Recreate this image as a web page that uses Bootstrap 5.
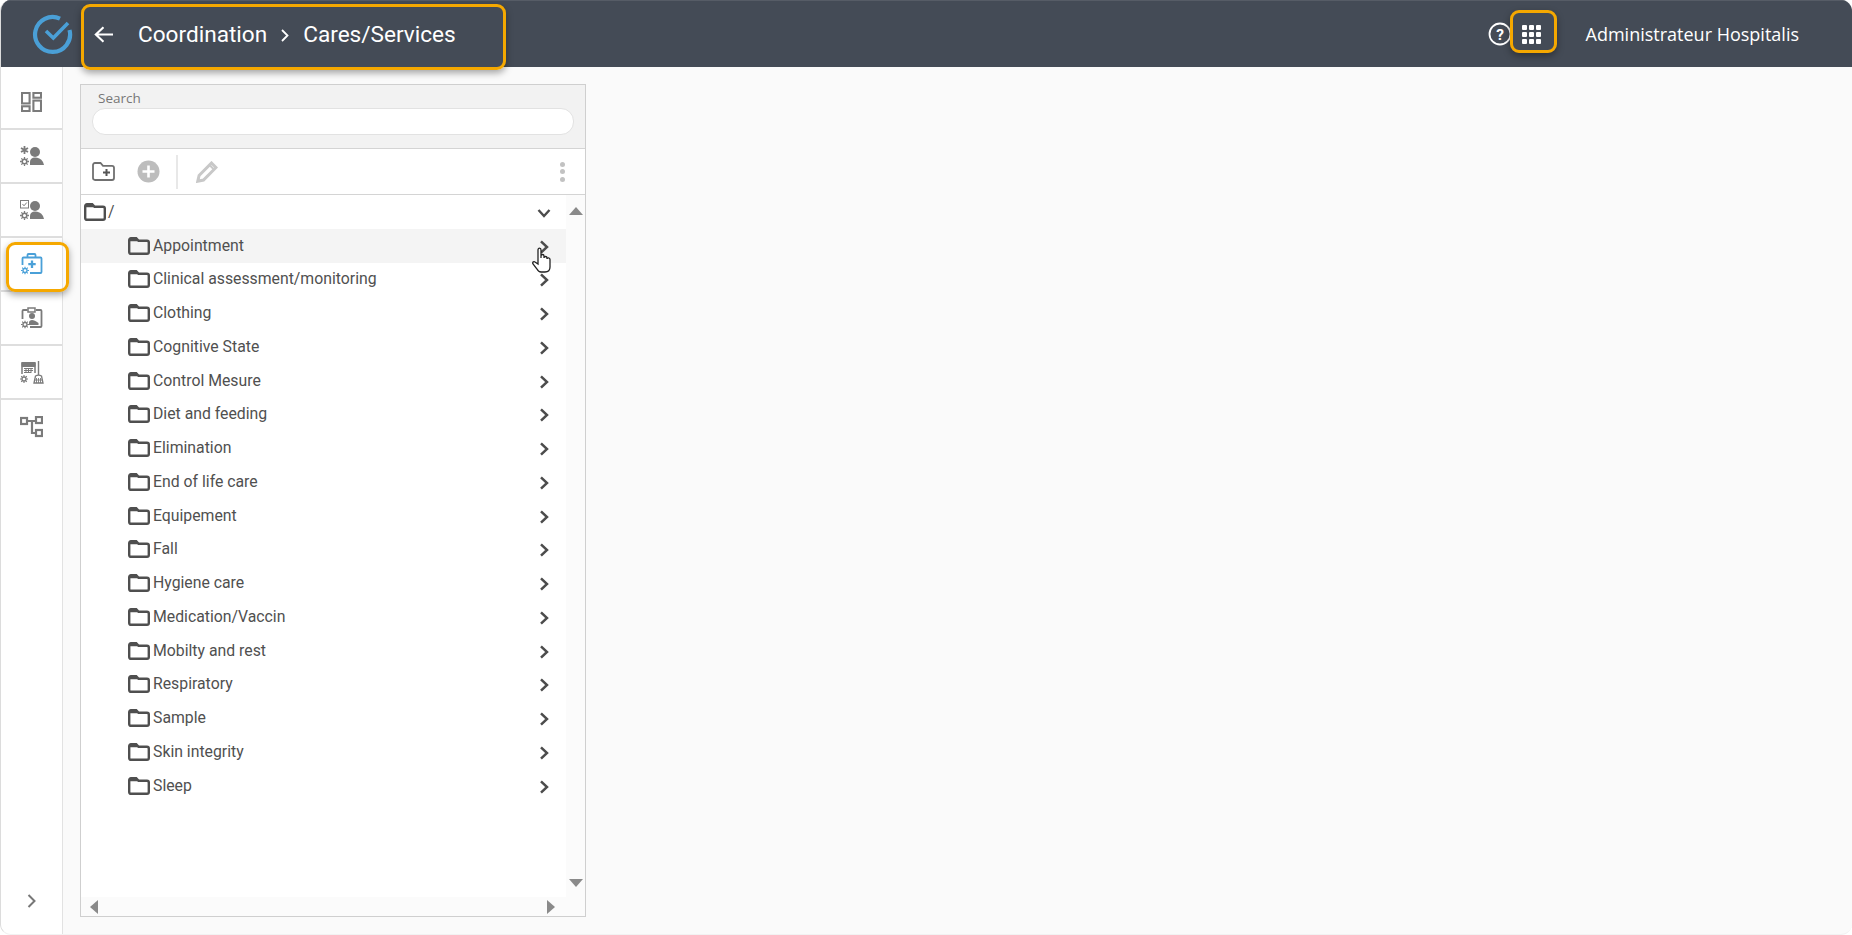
<!DOCTYPE html>
<html lang="en">
<head>
<meta charset="utf-8">
<title>Cares/Services</title>
<link href="https://cdn.jsdelivr.net/npm/bootstrap@5.3.0/dist/css/bootstrap.min.css" rel="stylesheet">
<style>
html,body{height:100%;margin:0;background:#fff;overflow:hidden}
body{font-family:Roboto,"Liberation Sans",sans-serif;color:#555}
.app-win{height:935px;border-radius:11px;overflow:hidden;border-left:1px solid #dcdcdc;border-bottom:1px solid #f2f2f2;position:relative;background:#fafafa}
.top-bar{height:67px;background:#444b56;color:#fff;border-top:1px solid #565c66;flex:none}
.logo-slot{width:80px;padding-left:31px}
.crumb-back{width:19px;margin-left:13px;margin-right:25px}
.crumb-text{font-size:22.6px;line-height:1;padding-top:2px}
.crumb-sep{margin:0 14px 0 14px}
.help-slot{margin-right:10px}
.apps-slot{width:19px;margin-right:45px;display:grid;grid-template-columns:repeat(3,5px);gap:2px}
.apps-slot span{height:5px;background:#fff;border-radius:1px}
.user-name{font-family:"Open Sans","Liberation Sans",sans-serif;font-size:18px;margin-right:53px}
.side-rail{width:62px;flex:none;background:#fff;border-right:1px solid #e2e2e2;padding-top:9px}
.rail-item{height:54px;border-bottom:2px solid #dedede;color:#7b7b7b}
.rail-item.no-rule{border-bottom:0}
.rail-item.is-active{color:#4aa0d8}
.rail-more{height:42px;padding-top:2px;color:#777}
.work-area{padding:17px 0 17px 17px}
.tree-panel{width:506px;height:100%;background:#fff;border:1px solid #cfcfcf}
.search-head{height:64px;background:#f2f2f2;border-bottom:1px solid #d4d4d4;padding:4px 10px 0 11px}
.search-label{font-family:"Open Sans","Liberation Sans",sans-serif;font-size:13.5px;line-height:18px;color:#777;padding-left:6px}
.search-box{height:27px;border:1px solid #e2e2e2;border-radius:13px;background:#fff;width:482px;margin-top:1px}
.tool-row{height:46px;border-bottom:1px solid #d4d4d4;padding:0 11px 0 11px}
.tool-plus{margin-left:22px}
.tool-sep{width:2px;height:34px;background:#e8e8e8;margin:0 18px 0 16px}
.kebab{margin-left:auto;margin-right:9px;width:5px;display:grid;gap:2.5px}
.kebab span{height:5px;width:5px;border-radius:50%;background:#c2c2c2}
.tree-body{min-height:0}
.tree-scroll{min-width:0}
.tree-row{height:33.75px;font-size:15.8px;color:#505050;padding-left:47px;padding-right:17px}
.tree-row.root-row{padding-left:3px;padding-right:15px}
.tree-row.is-hover{background:#f4f4f4}
.tree-label{margin-left:3px;line-height:1}
.root-row .tree-label{margin-left:2px}
.tree-row svg.fold{flex:none}
.tree-row svg.chev{margin-left:auto;margin-top:2px;flex:none}
.vbar{width:19px;background:#fbfbfb;padding:12px 0 10px}
.hbar{height:19px;background:#fbfbfb;padding:0 30px 0 9px}
.mark-box{position:absolute;border:3px solid #f5a800;border-radius:9px;box-shadow:0 3px 7px rgba(0,0,0,.35);pointer-events:none}
.mark-crumb{left:80px;top:4px;width:425px;height:66px}
.mark-apps{left:1509px;top:10px;width:47px;height:43px}
.mark-rail{left:5px;top:242px;width:63px;height:50px}
.hand-cursor{position:absolute;left:531px;top:247px}
</style>
</head>
<body>
<svg width="0" height="0" class="d-block" aria-hidden="true">
<symbol id="folder" viewBox="0 0 22 18"><path d="M1.200 3.200C1.200 2 2 1.200 3 1.200h5.200l2.400 2.600H19c1.200 0 1.800.8 1.800 1.800V15c0 1.100-.7 1.800-1.800 1.800H3c-1.100 0-1.800-.7-1.800-1.800z" fill="none" stroke="#4f4f4f" stroke-width="2.400"/><path d="M1 2.600C1 1.500 1.800 1 3 1h5.200l2.400 3.200H1z" fill="#4f4f4f"/></symbol>
<symbol id="chevr" viewBox="0 0 10 14"><path d="M2 1.300 8 7l-6 5.700" fill="none" stroke="#4c4c4c" stroke-width="2.500"/></symbol>
<symbol id="gear" viewBox="0 0 12 12"><circle cx="6" cy="6" r="3" fill="none" stroke="currentColor" stroke-width="2"/><path d="M6 0v2.500M6 9.500V12M0 6h2.500M9.500 6H12M1.800 1.800l1.800 1.800M8.400 8.400l1.800 1.800M1.800 10.200l1.800-1.800M8.400 3.600l1.800-1.800" stroke="currentColor" stroke-width="1.700"/></symbol>
</svg>
<div class="app-win d-flex flex-column">
  <header class="top-bar d-flex align-items-center">
    <div class="logo-slot d-flex align-items-center">
      <svg width="41" height="41" viewBox="0 0 41 41"><path d="M28 4.600A17.500 17.500 0 1 0 37.500 16" fill="none" stroke="#4a9fd6" stroke-width="4.200"/><path d="M14 17l7.300 7L36 9" fill="none" stroke="#4a9fd6" stroke-width="3.600"/></svg>
    </div>
    <svg class="crumb-back" width="19" height="17" viewBox="0 0 19 17"><path d="M19 8.500H2M9.500 1.200 1.800 8.500l7.700 7.300" fill="none" stroke="#fff" stroke-width="2.100"/></svg>
    <div class="crumb-text d-flex align-items-center">
      <span>Coordination</span>
      <svg class="crumb-sep" width="8" height="13" viewBox="0 0 8 13"><path d="M1 1l5.500 5.500L1 12" fill="none" stroke="#fff" stroke-width="1.800"/></svg>
      <span>Cares/Services</span>
    </div>
    <div class="ms-auto d-flex align-items-center">
      <svg class="help-slot" width="24" height="24" viewBox="0 0 24 24"><circle cx="12" cy="12" r="10.500" fill="none" stroke="#fff" stroke-width="1.800"/><text x="12" y="17.500" text-anchor="middle" font-family="Roboto,sans-serif" font-size="15.500" font-weight="700" fill="#fff">?</text></svg>
      <div class="apps-slot"><span></span><span></span><span></span><span></span><span></span><span></span><span></span><span></span><span></span></div>
      <div class="user-name">Administrateur Hospitalis</div>
    </div>
  </header>
  <div class="d-flex flex-grow-1" style="min-height:0">
    <nav class="side-rail d-flex flex-column">
      <div class="rail-item d-flex align-items-center justify-content-center">
        <svg width="21" height="20" viewBox="0 0 22 21" fill="none" stroke="currentColor" stroke-width="2.200"><rect x="1" y="1" width="8" height="11"/><rect x="13" y="1" width="8" height="5"/><rect x="1" y="15" width="8" height="5"/><rect x="13" y="9" width="8" height="11"/></svg>
      </div>
      <div class="rail-item d-flex align-items-center justify-content-center">
        <svg width="24" height="21" viewBox="0 0 24 21"><use href="#gear" x="0" y="11" width="9" height="9"/><path d="M4.500 0v8M1 2l7 4M8 2 1 6" stroke="currentColor" stroke-width="1.800"/><circle cx="15" cy="6" r="5" fill="currentColor"/><path d="M10 19v-3c0-3 2-4.500 5-4.500s6 1 8 4.500l1 3z" fill="currentColor"/></svg>
      </div>
      <div class="rail-item d-flex align-items-center justify-content-center">
        <svg width="24" height="21" viewBox="0 0 24 21"><use href="#gear" x="0" y="11" width="9" height="9"/><rect x=".5" y=".5" width="8" height="7.500" fill="none" stroke="currentColor"/><path d="M2.500 4l1.500 1.800L6.800 2.500" fill="none" stroke="currentColor"/><circle cx="15" cy="6" r="5" fill="currentColor"/><path d="M10 19v-3c0-3 2-4.500 5-4.500s6 1 8 4.500l1 3z" fill="currentColor"/></svg>
      </div>
      <div class="rail-item is-active d-flex align-items-center justify-content-center">
        <svg width="22" height="22" viewBox="0 0 22 22" fill="none" stroke="currentColor" stroke-width="1.800"><path d="M1.500 12V5.500q0-1 1-1h17q1 0 1 1V19q0 1-1 1H9"/><path d="M6.500 4.500V2q0-1 1-1h6q1 0 1 1v2.500"/><path d="M11 7.500v7.500M7.300 11.200h7.400" stroke-width="2.300"/><use href="#gear" x="0" y="13.500" width="8" height="8"/></svg>
      </div>
      <div class="rail-item d-flex align-items-center justify-content-center">
        <svg width="22" height="22" viewBox="0 0 22 22"><path d="M1.500 12V4q0-1 1-1h4M15 3h4.500q1 0 1 1v15q0 1-1 1H9" fill="none" stroke="currentColor" stroke-width="1.800"/><rect x="7" y="1" width="7" height="4" fill="none" stroke="currentColor" stroke-width="1.500"/><circle cx="11" cy="9" r="3" fill="currentColor"/><path d="M8 18v-2.500c0-1.500 1.500-2.500 3-2.500s4 1 6.500 3v2z" fill="currentColor"/><use href="#gear" x="0" y="13.500" width="8" height="8"/></svg>
      </div>
      <div class="rail-item d-flex align-items-center justify-content-center">
        <svg width="24" height="23" viewBox="0 0 24 23" fill="none" stroke="currentColor"><path d="M2 13V2h13v10" stroke-width="1.500"/><path d="M2 1.500h13v4H2z" fill="currentColor" stroke-width="1"/><path d="M4 7.500h9M4 9.500h9M4 11.500h7M6 7v5M8.500 7v5M11 7v5" stroke-width="1"/><path d="M18.500 0v14" stroke-width="1.400"/><path d="M14 22l1.500-7q3-1.800 6 0l1.500 7z" stroke-width="1.300"/><path d="M14.500 19h8M16.500 22v-5M18.500 22v-5M20.500 22v-5" stroke-width=".9"/><use href="#gear" x="0" y="14" width="8" height="8"/></svg>
      </div>
      <div class="rail-item no-rule d-flex align-items-center justify-content-center">
        <svg width="23" height="22" viewBox="0 0 23 22" fill="none" stroke="currentColor" stroke-width="2.200"><rect x="1" y="2" width="6" height="6"/><rect x="16" y="1" width="6" height="6"/><rect x="16" y="14" width="6" height="6"/><path d="M7 5h9M12 5v12h4"/></svg>
      </div>
      <div class="rail-more mt-auto d-flex align-items-start justify-content-center">
        <svg width="9" height="14" viewBox="0 0 9 14"><path d="M1.500 1 7.500 7l-6 6" fill="none" stroke="currentColor" stroke-width="2"/></svg>
      </div>
    </nav>
    <main class="work-area flex-grow-1">
      <section class="tree-panel d-flex flex-column">
        <div class="search-head">
          <div class="search-label">Search</div>
          <div class="search-box"></div>
        </div>
        <div class="tool-row d-flex align-items-center">
          <svg width="23" height="19" viewBox="0 0 23 19"><path d="M1 3c0-1.200.8-2 2-2h5.500l2.500 2.800h9c1.200 0 2 .8 2 2V16c0 1.200-.8 2-2 2H3c-1.200 0-2-.8-2-2z" fill="none" stroke="#707070" stroke-width="1.800"/><path d="M14.500 7v7M11 10.500h7" stroke="#555" stroke-width="2"/></svg>
          <svg class="tool-plus" width="23" height="23" viewBox="0 0 23 23"><circle cx="11.500" cy="11.500" r="11" fill="#bdbdbd"/><path d="M11.500 5.500v12M5.500 11.500h12" stroke="#fff" stroke-width="2.600"/></svg>
          <div class="tool-sep"></div>
          <svg width="22" height="22" viewBox="0 0 22 22"><path d="M1.800 20.200l1.300-5.700L15.500 2l4.500 4.500L7.500 19z" fill="none" stroke="#c8c8c8" stroke-width="3"/><path d="M13.500 4l4.500 4.500" stroke="#c8c8c8" stroke-width="2"/></svg>
          <div class="kebab"><span></span><span></span><span></span></div>
        </div>
        <div class="tree-body d-flex flex-grow-1 flex-column">
          <div class="d-flex flex-grow-1" style="min-height:0">
            <div class="tree-scroll flex-grow-1">
              <div class="tree-row root-row d-flex align-items-center"><svg class="fold" width="22" height="18"><use href="#folder"/></svg><span class="tree-label">/</span><svg class="chev" width="14" height="10" viewBox="0 0 14 10"><path d="M1.500 2 7 8l5.500-6" fill="none" stroke="#4c4c4c" stroke-width="2.400"/></svg></div>
              <div class="tree-row is-hover d-flex align-items-center"><svg class="fold" width="22" height="18"><use href="#folder"/></svg><span class="tree-label">Appointment</span><svg class="chev" width="10" height="14"><use href="#chevr"/></svg></div>
              <div class="tree-row d-flex align-items-center"><svg class="fold" width="22" height="18"><use href="#folder"/></svg><span class="tree-label">Clinical assessment/monitoring</span><svg class="chev" width="10" height="14"><use href="#chevr"/></svg></div>
              <div class="tree-row d-flex align-items-center"><svg class="fold" width="22" height="18"><use href="#folder"/></svg><span class="tree-label">Clothing</span><svg class="chev" width="10" height="14"><use href="#chevr"/></svg></div>
              <div class="tree-row d-flex align-items-center"><svg class="fold" width="22" height="18"><use href="#folder"/></svg><span class="tree-label">Cognitive State</span><svg class="chev" width="10" height="14"><use href="#chevr"/></svg></div>
              <div class="tree-row d-flex align-items-center"><svg class="fold" width="22" height="18"><use href="#folder"/></svg><span class="tree-label">Control Mesure</span><svg class="chev" width="10" height="14"><use href="#chevr"/></svg></div>
              <div class="tree-row d-flex align-items-center"><svg class="fold" width="22" height="18"><use href="#folder"/></svg><span class="tree-label">Diet and feeding</span><svg class="chev" width="10" height="14"><use href="#chevr"/></svg></div>
              <div class="tree-row d-flex align-items-center"><svg class="fold" width="22" height="18"><use href="#folder"/></svg><span class="tree-label">Elimination</span><svg class="chev" width="10" height="14"><use href="#chevr"/></svg></div>
              <div class="tree-row d-flex align-items-center"><svg class="fold" width="22" height="18"><use href="#folder"/></svg><span class="tree-label">End of life care</span><svg class="chev" width="10" height="14"><use href="#chevr"/></svg></div>
              <div class="tree-row d-flex align-items-center"><svg class="fold" width="22" height="18"><use href="#folder"/></svg><span class="tree-label">Equipement</span><svg class="chev" width="10" height="14"><use href="#chevr"/></svg></div>
              <div class="tree-row d-flex align-items-center"><svg class="fold" width="22" height="18"><use href="#folder"/></svg><span class="tree-label">Fall</span><svg class="chev" width="10" height="14"><use href="#chevr"/></svg></div>
              <div class="tree-row d-flex align-items-center"><svg class="fold" width="22" height="18"><use href="#folder"/></svg><span class="tree-label">Hygiene care</span><svg class="chev" width="10" height="14"><use href="#chevr"/></svg></div>
              <div class="tree-row d-flex align-items-center"><svg class="fold" width="22" height="18"><use href="#folder"/></svg><span class="tree-label">Medication/Vaccin</span><svg class="chev" width="10" height="14"><use href="#chevr"/></svg></div>
              <div class="tree-row d-flex align-items-center"><svg class="fold" width="22" height="18"><use href="#folder"/></svg><span class="tree-label">Mobilty and rest</span><svg class="chev" width="10" height="14"><use href="#chevr"/></svg></div>
              <div class="tree-row d-flex align-items-center"><svg class="fold" width="22" height="18"><use href="#folder"/></svg><span class="tree-label">Respiratory</span><svg class="chev" width="10" height="14"><use href="#chevr"/></svg></div>
              <div class="tree-row d-flex align-items-center"><svg class="fold" width="22" height="18"><use href="#folder"/></svg><span class="tree-label">Sample</span><svg class="chev" width="10" height="14"><use href="#chevr"/></svg></div>
              <div class="tree-row d-flex align-items-center"><svg class="fold" width="22" height="18"><use href="#folder"/></svg><span class="tree-label">Skin integrity</span><svg class="chev" width="10" height="14"><use href="#chevr"/></svg></div>
              <div class="tree-row d-flex align-items-center"><svg class="fold" width="22" height="18"><use href="#folder"/></svg><span class="tree-label">Sleep</span><svg class="chev" width="10" height="14"><use href="#chevr"/></svg></div>
            </div>
            <div class="vbar d-flex flex-column justify-content-between align-items-center">
              <svg width="14" height="8"><path d="M7 0l7 8H0z" fill="#8a8a8a"/></svg>
              <svg width="14" height="8"><path d="M7 8 14 0H0z" fill="#8a8a8a"/></svg>
            </div>
          </div>
          <div class="hbar d-flex justify-content-between align-items-center">
            <svg width="8" height="14"><path d="M0 7l8-7v14z" fill="#8a8a8a"/></svg>
            <svg width="8" height="14"><path d="M8 7 0 0v14z" fill="#8a8a8a"/></svg>
          </div>
        </div>
      </section>
    </main>
  </div>
  <div class="mark-box mark-crumb"></div>
  <div class="mark-box mark-apps"></div>
  <div class="mark-box mark-rail"></div>
  <svg class="hand-cursor" width="20" height="26" viewBox="0 0 20 26"><path d="M6 17V3c0-2.500 3-2.500 3 0v8-2c0-2 3-2 3 0v2c0-2 3-2 3 0v1c0-1.500 3-1.500 3 .5V20c0 3-2 5-5 5H9c-2 0-3-1-4-3l-4-5c-1-2 1-3 2-2z" fill="#fff" stroke="#222" stroke-width="1.300"/></svg>
</div>
<script src="https://cdn.jsdelivr.net/npm/bootstrap@5.3.0/dist/js/bootstrap.bundle.min.js"></script>
</body>
</html>
